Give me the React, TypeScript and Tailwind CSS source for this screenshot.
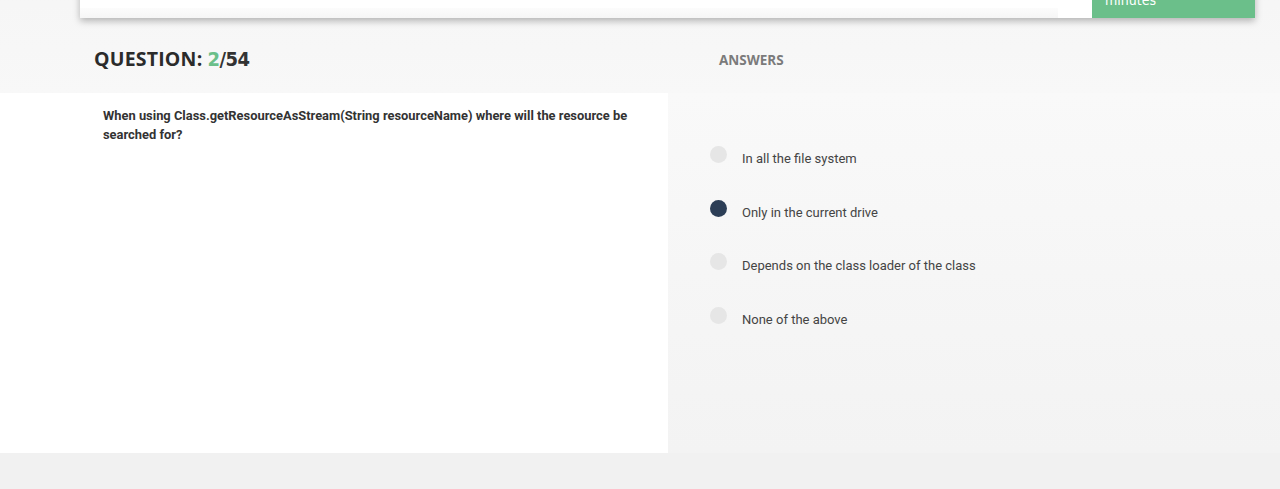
import { useState } from "react";

const answers = [
  "In all the file system",
  "Only in the current drive",
  "Depends on the class loader of the class",
  "None of the above",
];

export default function App() {
  const [selected, setSelected] = useState(1);

  return (
    <div className="w-full bg-[#f1f1f1] font-['Roboto',sans-serif]">
      <div className="bg-gradient-to-b from-[#f5f5f5] to-[#f8f8f8]">
        {/* top card (scrolled up, mostly out of view) */}
        <div className="ml-[80px] mr-[25px] -mt-[42px] flex h-[60px] shadow-[0_3px_7px_rgba(0,0,0,0.28)]">
          <div className="flex flex-1 flex-col justify-end bg-white">
            <div className="mr-[34px] h-[10px] bg-gradient-to-b from-[#fcfcfc] to-[#f6f6f6]" />
          </div>
          <div className="flex w-[163px] items-end bg-[#6bbf8a] px-[13px] pb-[11px]">
            <span className="font-['DejaVu_Sans_Condensed',sans-serif] text-[14px] leading-none text-white">
              minutes
            </span>
          </div>
        </div>

        <div className="flex h-[75px] items-center">
          <div className="w-[668px] pl-[94px] pt-[6px]">
            <h2 className="flex items-baseline font-['Open_Sans',sans-serif] text-[19.5px] font-bold tracking-[0.2px] text-[#2b2b2b]">
              QUESTION:
              <span className="ml-[5px] font-['DejaVu_Sans_Condensed',sans-serif] text-[20px] font-bold tracking-[-0.5px] text-[#333]">
                <span className="text-[#6bbf8a]">2</span>/54
              </span>
            </h2>
          </div>
          <div className="pl-[51px] pt-[10px] font-['Open_Sans',sans-serif] text-[13.5px] font-bold text-[#7b7b7b]">
            ANSWERS
          </div>
        </div>
      </div>

      <div className="flex h-[360px]">
        <div className="w-[668px] bg-white pl-[103px] pr-[36px] pt-[13px]">
          <p className="text-[12.9px] font-bold leading-[19px] text-[#333]">
            When using Class.getResourceAsStream(String resourceName) where will the resource be searched for?
          </p>
        </div>
        <div className="flex-1 bg-gradient-to-b from-[#f9f9f9] to-[#f3f3f3] pl-[42px] pt-[53px]">
          <ul className="flex flex-col gap-[32.5px]">
            {answers.map((a, i) => (
              <li
                key={a}
                className="flex cursor-pointer items-start gap-[15px]"
                onClick={() => setSelected(i)}
              >
                <span
                  className={
                    i === selected
                      ? "h-[17px] w-[17px] shrink-0 rounded-full bg-[#2c3e56]"
                      : "h-[17px] w-[17px] shrink-0 rounded-full bg-[#e6e6e6]"
                  }
                />
                <span className="pt-[4px] text-[13px] leading-[17px] text-[#444]">{a}</span>
              </li>
            ))}
          </ul>
        </div>
      </div>

      <div className="h-[36px] bg-[#f1f1f1]" />
    </div>
  );
}
